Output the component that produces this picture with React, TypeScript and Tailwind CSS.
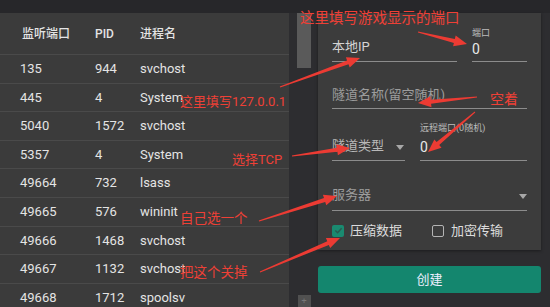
const rows = [
  ["135", "944", "svchost"],
  ["445", "4", "System"],
  ["5040", "1572", "svchost"],
  ["5357", "4", "System"],
  ["49664", "732", "lsass"],
  ["49665", "576", "wininit"],
  ["49666", "1468", "svchost"],
  ["49667", "1132", "svchost"],
  ["49668", "1712", "spoolsv"],
];

const font = { fontFamily: "Roboto, 'Noto Sans CJK SC', sans-serif" };

function arrowPoints(x1: number, y1: number, x2: number, y2: number) {
  const dx = x2 - x1;
  const dy = y2 - y1;
  const len = Math.sqrt(dx * dx + dy * dy);
  const ux = dx / len;
  const uy = dy / len;
  const nx = -uy;
  const ny = ux;
  const head = 13;
  const hw = 5.5;
  const bx = x2 - ux * head;
  const by = y2 - uy * head;
  const pts = [
    [x1 + nx * 0.5, y1 + ny * 0.5],
    [bx + nx * 2, by + ny * 2],
    [bx + nx * hw, by + ny * hw],
    [x2, y2],
    [bx - nx * hw, by - ny * hw],
    [bx - nx * 2, by - ny * 2],
    [x1 - nx * 0.5, y1 - ny * 0.5],
  ];
  return pts.map((p) => p.map((v) => v.toFixed(1)).join(",")).join(" ");
}

const arrows: [number, number, number, number][] = [
  [280, 87, 360, 58],
  [418, 32, 467, 44],
  [477, 97, 418, 103],
  [475, 112, 428, 152],
  [292, 156, 350, 148],
  [259, 221, 337, 196],
  [260, 272, 340, 238],
];

function Caret() {
  return (
    <svg width="8" height="5" viewBox="0 0 8 5">
      <path d="M0 0 L8 0 L4 5 Z" fill="#a8a8a8" />
    </svg>
  );
}

export default function App() {
  return (
    <div className="relative w-[550px] h-[307px] overflow-hidden bg-[#2d2d30] flex flex-col" style={font}>
      <div className="h-[13px] bg-[#27272a] shrink-0" />
      <div className="flex flex-1 min-h-0">
        {/* process table */}
        <div className="w-[289px] bg-[#3b3b3b] text-[#e4e4e4] overflow-hidden">
          <div className="h-[42px] flex items-center pl-[22px] text-[12px] font-medium border-b border-[#4a4a4a]">
            <span className="w-[73px]">监听端口</span>
            <span className="w-[45px]">PID</span>
            <span>进程名</span>
          </div>
          {rows.map((r) => (
            <div key={r[0]} className="h-[28.6px] flex items-center pl-[20px] text-[13px] border-b border-[#4a4a4a]">
              <span className="w-[75px]">{r[0]}</span>
              <span className="w-[45px]">{r[1]}</span>
              <span>{r[2]}</span>
            </div>
          ))}
        </div>

        {/* scrollbar */}
        <div className="w-[29px] flex flex-col items-center pl-[1px]">
          <div className="w-[14px] h-[55px] bg-[#5a5a5a]" />
          <div className="flex-1" />
          <div className="w-[13px] h-[12px] bg-[#505050] flex items-center justify-center text-[9px] text-[#777] leading-none">+</div>
        </div>

        {/* form */}
        <div className="w-[223px] flex flex-col">
          <div className="h-[237px] bg-[#3c3c3c] px-[14px] pt-[14px] flex flex-col shadow-[0_1px_3px_rgba(0,0,0,0.4)]">
            <div className="flex gap-[15px]">
              <div className="w-[125px] h-[35px] border-b-[1.5px] border-[#8c8c8c] flex items-end pb-[5px] text-[13px] text-[#d4d4d4]">
                本地IP
              </div>
              <div className="flex-1 h-[35px] border-b-[1.5px] border-[#8c8c8c] flex flex-col pb-[4px]">
                <span className="text-[9px] leading-[12px] text-[#bdbdbd]">端口</span>
                <span className="text-[14px] leading-[18px] text-[#e8e8e8] mt-[1px]">0</span>
              </div>
            </div>
            <div className="mt-[25px] h-[22px] border-b-[1.5px] border-[#8c8c8c] flex items-end pb-[4px] text-[13px] text-[#9c9c9c]">
              隧道名称(留空随机)
            </div>
            <div className="mt-[13px] flex gap-[15px]">
              <div className="w-[73px] h-[39px] border-b-[1.5px] border-[#8c8c8c] flex items-end justify-between pb-[5px] text-[13px] text-[#b8b8b8]">
                <span>隧道类型</span>
                <span className="mb-[5px] mr-[1px]"><Caret /></span>
              </div>
              <div className="flex-1 h-[39px] border-b-[1.5px] border-[#8c8c8c] flex flex-col pb-[4px]">
                <span className="text-[9px] leading-[12px] text-[#bdbdbd]">远程端口(0随机)</span>
                <span className="text-[14px] leading-[18px] text-[#e8e8e8] mt-[4px]">0</span>
              </div>
            </div>
            <div className="mt-[24px] h-[26px] border-b-[1.5px] border-[#8c8c8c] flex items-end justify-between pb-[6px] text-[13px] text-[#9c9c9c]">
              <span>服务器</span>
              <span className="mb-[5px]"><Caret /></span>
            </div>
            <div className="mt-[10px] flex items-center text-[13px] text-[#dcdcdc]">
              <span className="w-[12px] h-[12px] rounded-[2px] bg-[#1a8a70] flex items-center justify-center">
                <svg width="9" height="9" viewBox="0 0 10 10">
                  <path d="M1.5 5 L4 7.5 L8.5 2.5" stroke="#2a5a50" strokeWidth="1.6" fill="none" />
                </svg>
              </span>
              <span className="ml-[6px]">压缩数据</span>
              <span className="ml-[30px] w-[12px] h-[12px] rounded-[2px] border-[1.5px] border-[#b4b4b4]" />
              <span className="ml-[7px]">加密传输</span>
            </div>
          </div>
          <div className="mt-[16px] h-[27px] rounded-[3px] bg-[#14866e] flex items-center justify-center text-[13px] text-[#eef]">
            创建
          </div>
        </div>
      </div>

      {/* red annotations */}
      <svg className="absolute inset-0 pointer-events-none" width="550" height="307">
        {arrows.map((a, i) => (
          <polygon key={i} points={arrowPoints(a[0], a[1], a[2], a[3])} fill="#ec3b33" />
        ))}
      </svg>
      <span className="absolute left-[300px] top-[10px] text-[14.5px] leading-[18px] text-[#ee4036]">这里填写游戏显示的端口</span>
      <span className="absolute left-[180px] top-[94px] text-[13px] leading-[16px] text-[#ee4036]">这里填写127.0.0.1</span>
      <span className="absolute left-[490px] top-[91px] text-[14px] leading-[17px] text-[#ee4036]">空着</span>
      <span className="absolute left-[232px] top-[152px] text-[13px] leading-[16px] text-[#ee4036]">选择TCP</span>
      <span className="absolute left-[180px] top-[210px] text-[13.5px] leading-[17px] text-[#ee4036]">自己选一个</span>
      <span className="absolute left-[180px] top-[264px] text-[13.5px] leading-[17px] text-[#ee4036]">把这个关掉</span>
    </div>
  );
}
